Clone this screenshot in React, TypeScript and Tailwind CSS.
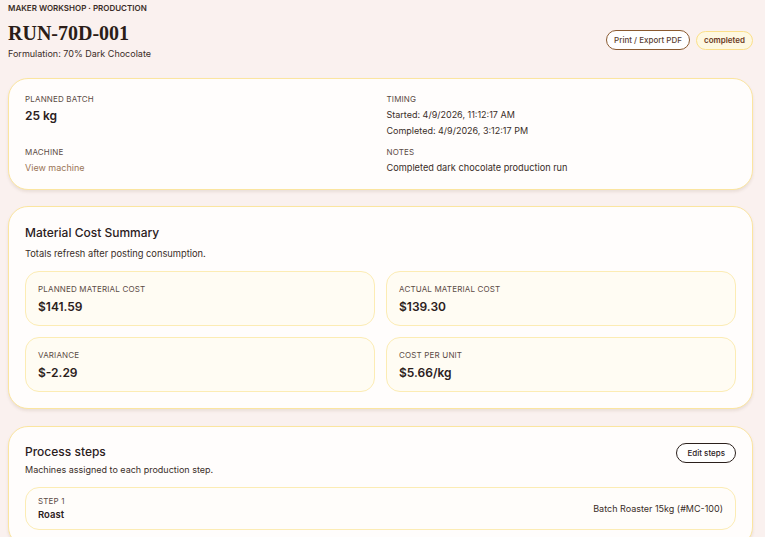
const fontSans = "font-['Inter','Liberation_Sans',sans-serif]"

function Label({ children }: { children: React.ReactNode }) {
  return (
    <div className="text-[8px] leading-[12px] uppercase tracking-[0.02em] text-[#5b4b45]">
      {children}
    </div>
  )
}

function CostBox({ label, value }: { label: string; value: string }) {
  return (
    <div className="rounded-[14px] border border-[#fcecb4] bg-[#fffcf3] px-3 pt-[11px] pb-[12px] h-[55px]">
      <Label>{label}</Label>
      <div className="mt-[3px] text-[12px] leading-[17px] font-semibold text-[#2b201c]">{value}</div>
    </div>
  )
}

export default function App() {
  return (
    <div className={`${fontSans} min-h-screen bg-[#faf1ef] pl-2 pr-3 pt-[2px] text-[#2b201c]`}>
      {/* Header */}
      <div className="flex items-start justify-between">
        <div>
          <div className="text-[8px] leading-[12px] font-semibold uppercase text-[#3a2d28]">
            Maker Workshop · Production
          </div>
          <h1 className="mt-[7px] font-['Liberation_Serif',serif] text-[20px] leading-[24px] font-bold text-[#2b1d18]">
            RUN-70D-001
          </h1>
          <div className="mt-[2px] text-[9px] leading-[14px] text-[#3a2d28]">Formulation: 70% Dark Chocolate</div>
        </div>
        <div className="mt-[28px] flex items-center gap-[6px]">
          <button className="h-[20px] rounded-full border border-[#8a5a30] bg-white px-[7px] text-[8px] font-medium text-[#5a4030]">
            Print / Export PDF
          </button>
          <span className="flex h-[19px] items-center rounded-full border border-[#fbe08a] bg-[#fef8e1] px-[7px] text-[8px] font-semibold text-[#6b3a1e]">
            completed
          </span>
        </div>
      </div>

      {/* Overview card */}
      <div className="mt-[17px] rounded-[20px] border border-[#fbe5a0] bg-[#fffdfc] px-4 pt-[14px] pb-[13px] shadow-[0_2px_3px_rgba(120,90,60,0.12)]">
        <div className="grid grid-cols-2 gap-x-3 gap-y-[7px]">
          <div>
            <Label>Planned batch</Label>
            <div className="mt-[2px] text-[12px] leading-[17px] font-semibold text-[#2b201c]">25 kg</div>
          </div>
          <div>
            <Label>Timing</Label>
            <div className="mt-[2px] text-[9px] leading-[16px] text-[#3a2d28]">Started: 4/9/2026, 11:12:17 AM</div>
            <div className="text-[9px] leading-[16px] text-[#3a2d28]">Completed: 4/9/2026, 3:12:17 PM</div>
          </div>
          <div>
            <Label>Machine</Label>
            <a className="mt-[2px] block text-[9px] leading-[16px] text-[#9a7456]">View machine</a>
          </div>
          <div>
            <Label>Notes</Label>
            <div className="mt-[2px] text-[9.2px] leading-[16px] text-[#3a2d28]">Completed dark chocolate production run</div>
          </div>
        </div>
      </div>

      {/* Material cost summary */}
      <div className="mt-[16px] rounded-[20px] border border-[#fbe5a0] bg-[#fffdfc] px-4 pt-[17px] pb-[16px] shadow-[0_2px_3px_rgba(120,90,60,0.12)]">
        <h2 className="text-[12px] leading-[18px] font-medium text-[#2b201c]">Material Cost Summary</h2>
        <p className="mt-[5px] text-[9.3px] leading-[14px] text-[#3a2d28]">Totals refresh after posting consumption.</p>
        <div className="mt-[10px] grid grid-cols-2 gap-[11px]">
          <CostBox label="Planned material cost" value="$141.59" />
          <CostBox label="Actual material cost" value="$139.30" />
          <CostBox label="Variance" value="$-2.29" />
          <CostBox label="Cost per unit" value="$5.66/kg" />
        </div>
      </div>

      {/* Process steps */}
      <div className="mt-[17px] rounded-[20px] border border-[#fbe5a0] bg-[#fffdfc] px-4 pt-[16px] pb-[16px] shadow-[0_2px_3px_rgba(120,90,60,0.12)]">
        <div className="flex items-start justify-between">
          <div>
            <h2 className="text-[12px] leading-[18px] font-medium text-[#2b201c]">Process steps</h2>
            <p className="mt-[2px] text-[9px] leading-[14px] text-[#3a2d28]">Machines assigned to each production step.</p>
          </div>
          <button className="h-[20px] rounded-full border border-[#2b201c] bg-white px-[10px] text-[8px] font-medium text-[#2b201c]">
            Edit steps
          </button>
        </div>
        <div className="mt-[10px] flex items-center justify-between rounded-[14px] border border-[#fcecb4] bg-[#fffdfa] px-3 py-[7px]">
          <div>
            <Label>Step 1</Label>
            <div className="mt-[1px] text-[9.5px] leading-[14px] font-semibold text-[#2b201c]">Roast</div>
          </div>
          <div className="text-[9px] text-[#3a2d28]">Batch Roaster 15kg (#MC-100)</div>
        </div>
      </div>
    </div>
  )
}
